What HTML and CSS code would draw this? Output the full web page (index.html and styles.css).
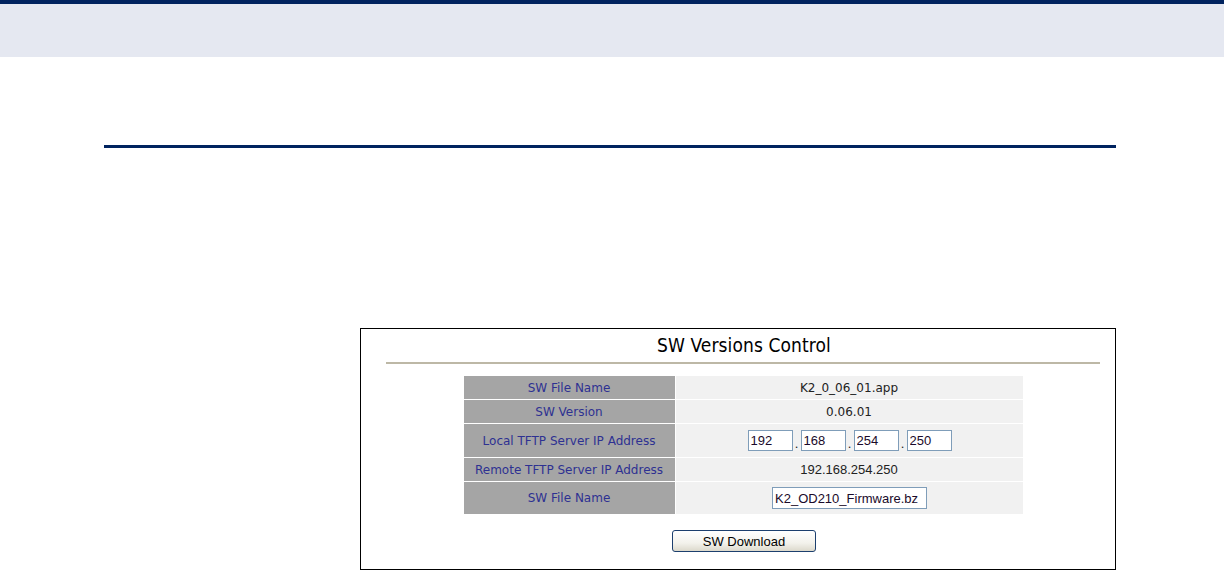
FILE: index.html
```html
<!DOCTYPE html>
<html>
<head>
<meta charset="utf-8">
<link rel="stylesheet" href="styles.css">
</head>
<body>
<div class="topband"></div>
<div class="content">
  <div class="rule"></div>
  <div class="panel">
    <div class="inner">
      <div class="title">SW Versions Control</div>
      <div class="sep"></div>
      <table class="grid">
        <tr class="r1"><td class="lbl">SW File Name</td><td class="val">K2_0_06_01.app</td></tr>
        <tr class="r1"><td class="lbl">SW Version</td><td class="val">0.06.01</td></tr>
        <tr class="r2"><td class="lbl">Local TFTP Server IP Address</td>
          <td class="val"><div class="ip"><input class="oct" value="192"><span class="dot">.</span><input class="oct" value="168"><span class="dot">.</span><input class="oct" value="254"><span class="dot">.</span><input class="oct" value="250"></div></td></tr>
        <tr class="r1"><td class="lbl">Remote TFTP Server IP Address</td><td class="val arial">192.168.254.250</td></tr>
        <tr class="r3"><td class="lbl">SW File Name</td><td class="val"><input class="fname" value="K2_OD210_Firmware.bz"></td></tr>
      </table>
      <div class="btnrow"><button class="btn">SW Download</button></div>
    </div>
  </div>
</div>
</body>
</html>
```

FILE: styles.css
```css
html, body { margin: 0; padding: 0; background: #fff; }
body { font-family: "DejaVu Sans", Verdana, sans-serif; overflow: hidden; height: 570px; }
.topband { height: 53px; background: #e5e8f1; border-top: 4px solid #00235f; }
.content { padding-left: 104px; width: 1012px; }
.rule { margin-top: 88px; height: 3px; background: #00235f; }
.panel { margin-top: 180px; margin-left: 256px; width: 754px; height: 240px; border: 1px solid #000; }
.inner { margin-left: 25px; width: 714px; display: flex; flex-direction: column; align-items: center; }
.title { font-family: "DejaVu Sans Condensed", "DejaVu Sans", sans-serif; font-size: 19px; letter-spacing: 0.1px; color: #000; height: 23px; line-height: 23px; margin-top: 5px; padding-left: 2px; }
.sep { align-self: stretch; height: 2px; background: #bdb8a6; margin-top: 5px; }
.grid { border-collapse: separate; border-spacing: 1px; margin-top: 11px; width: 561px; }
.grid td { padding: 0; text-align: center; font-size: 12px; }
.lbl { width: 211px; background: #a5a5a5; color: #2e3192; }
.val { background: #f1f1f1; color: #222; }
.arial { font-family: "Liberation Sans", Arial, sans-serif; font-size: 13px !important; }
.r1 td { height: 23px; }
.r2 td { height: 33px; }
.r3 td { height: 32px; }
.ip { display: flex; justify-content: center; align-items: flex-end; margin-left: 1px; }
.oct, .fname { box-sizing: border-box; border: 1px solid #7f9db9; background: #fff; font-family: "Liberation Sans", Arial, sans-serif; font-size: 13px; color: #1a0a2a; padding: 0 2px; margin: 0; outline: none; }
.oct { width: 45px; height: 21px; }
.dot { font-family: "Liberation Sans", Arial, sans-serif; font-size: 13px; width: 8px; text-align: center; line-height: 15px; }
.fname { width: 155px; height: 22px; margin-left: 1px; }
.btnrow { margin-top: 15px; }
.btn { box-sizing: border-box; width: 144px; height: 22px; border: 1px solid #1c3f6e; border-radius: 3px; background: linear-gradient(#ffffff, #f3f2ec 60%, #dcd9cc); font-family: "Liberation Sans", Arial, sans-serif; font-size: 13px; color: #000; padding: 0; margin-left: 2px; }
```
